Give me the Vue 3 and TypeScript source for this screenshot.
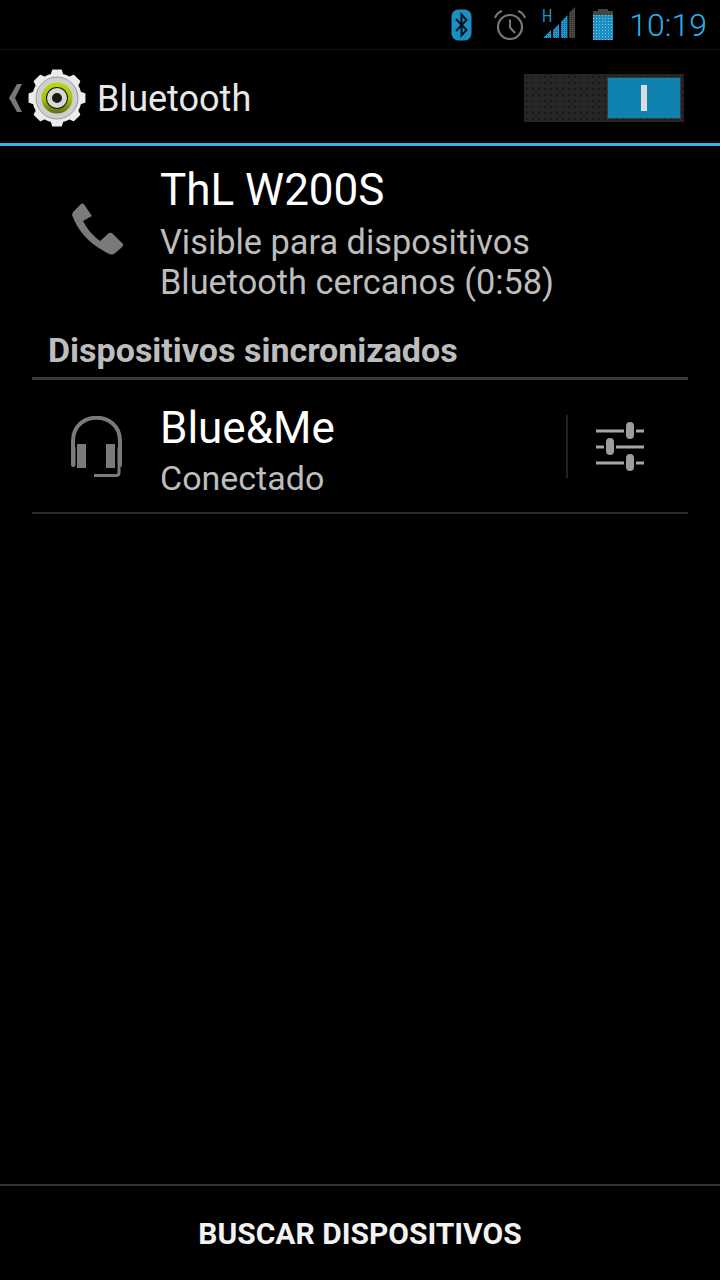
<template>
    <div class="screen">
        <div class="status-bar">
            <svg class="st-bt" width="21" height="32" viewBox="0 0 21 32">
                <rect x="0.5" y="0.5" width="20" height="31" rx="7" fill="#1b8fc4" />
                <path d="M5 10 L15.5 21 L10.5 26.5 V5.5 L15.5 11 L5 22" fill="none" stroke="#04141c" stroke-width="2" />
            </svg>
            <svg class="st-alarm" width="32" height="31" viewBox="0 0 32 31">
                <circle cx="16" cy="17" r="12" fill="none" stroke="#777" stroke-width="2.2" />
                <path d="M16 9.5 V17.5 L21 23" fill="none" stroke="#777" stroke-width="2" />
                <path d="M1 8 Q3 2.5 8 1 M24 1 Q29 2.5 31 8" fill="none" stroke="#777" stroke-width="2" />
            </svg>
            <div class="st-signal">
                <span class="st-h">H</span>
                <svg width="33" height="32" viewBox="0 0 33 32">
                    <defs>
                        <pattern id="sig-dots" width="2" height="2" patternUnits="userSpaceOnUse">
                            <rect width="2" height="2" fill="#1b9ad2" />
                            <rect width="1" height="1" fill="#0d5f85" />
                        </pattern>
                        <pattern id="sig-off" width="2" height="2" patternUnits="userSpaceOnUse">
                            <rect width="2" height="2" fill="#484848" />
                            <rect width="1" height="1" fill="#2c2c2c" />
                        </pattern>
                    </defs>
                    <path d="M0 31 L8 23 V31 Z" fill="url(#sig-dots)" />
                    <path d="M10 23 L16 17 V31 H10 Z" fill="url(#sig-dots)" />
                    <path d="M18 15 L24.5 8 V31 H18 Z" fill="url(#sig-dots)" />
                    <path d="M26 6 L32 0 V31 H26 Z" fill="url(#sig-off)" />
                </svg>
            </div>
            <svg class="st-batt" width="20" height="31" viewBox="0 0 20 31">
                <defs>
                    <pattern id="bat-dots" width="3" height="3" patternUnits="userSpaceOnUse">
                        <rect width="3" height="3" fill="#1b8fc4" />
                        <rect width="1" height="1" fill="#7cc6e6" />
                    </pattern>
                </defs>
                <rect x="5" y="0" width="10" height="3" fill="#444" />
                <rect x="0" y="2" width="20" height="4" fill="#444" />
                <rect x="0" y="6" width="20" height="25" fill="url(#bat-dots)" />
            </svg>
            <span class="st-time">10:19</span>
        </div>

        <div class="action-bar">
            <svg class="ab-back" width="13" height="28" viewBox="0 0 13 28">
                <path d="M13 0 H8 L0 14 L8 28 H13 L6 14 Z" fill="#777" />
            </svg>
            <svg class="ab-icon" width="60" height="60" viewBox="0 0 60 60">
                <defs>
                    <linearGradient id="green-ring" x1="0" y1="0" x2="0" y2="1">
                        <stop offset="0" stop-color="#bcd80c" />
                        <stop offset="0.55" stop-color="#a3bf12" />
                        <stop offset="1" stop-color="#5f6a14" />
                    </linearGradient>
                </defs>
                <path :d="gearPath" fill="#ececec" stroke="#ececec" stroke-width="1.5" stroke-linejoin="round" />
                <circle cx="30" cy="30" r="21" fill="#cfcfcf" stroke="#9a9a9a" stroke-width="1" />
                <circle cx="30" cy="30" r="15.5" fill="url(#green-ring)" />
                <circle cx="30" cy="30" r="11" fill="#1a1a10" />
                <circle cx="30" cy="30" r="7.5" fill="none" stroke="#d8d8d8" stroke-width="5" />
            </svg>
            <span class="ab-title">Bluetooth</span>
            <div class="ab-switch">
                <div class="ab-switch-thumb"><span class="ab-switch-i"></span></div>
            </div>
        </div>
        <div class="ab-line"></div>

        <div class="local-device">
            <div class="icon-col">
                <svg class="icon-phone" width="52" height="52" viewBox="0 0 52 52">
                    <path d="M0 12 Q0 9 3 7 L9 1 Q11 -0.5 12.5 2 L20 13 L11 18 Q17 30 28 38 L37 30 Q39 29 41 31 L51 41 Q51.5 43 49 45 L42 51 Q38 52.5 32 48 Q9 36 0 12 Z" fill="#7a7a7a" />
                </svg>
            </div>
            <div class="text-col">
                <div class="name name-big">ThL W200S</div>
                <div class="sub">Visible para dispositivos</div>
                <div class="sub">Bluetooth cercanos (0:58)</div>
            </div>
        </div>

        <div class="section-title">Dispositivos sincronizados</div>
        <div class="section-line"></div>

        <div class="device-row">
            <div class="icon-col">
                <svg class="icon-headset" width="51" height="62" viewBox="0 0 51 62">
                    <path d="M2 36 V25 C2 -6 49 -6 49 25 V36" fill="none" stroke="#7a7a7a" stroke-width="4" />
                    <rect x="0" y="30" width="4.5" height="21" rx="2" fill="#7a7a7a" />
                    <rect x="46.5" y="30" width="4.5" height="21" rx="2" fill="#7a7a7a" />
                    <rect x="6" y="28" width="9" height="24" fill="#7a7a7a" />
                    <rect x="35" y="28" width="9" height="24" fill="#7a7a7a" />
                    <path d="M48 50 V57 Q48 59.5 45 59.5 H23" fill="none" stroke="#7a7a7a" stroke-width="3" />
                </svg>
            </div>
            <div class="text-col">
                <div class="name">Blue&amp;Me</div>
                <div class="sub sub-status">Conectado</div>
            </div>
            <div class="row-action">
                <svg class="icon-tune" width="48" height="50" viewBox="0 0 48 50">
                    <g fill="#a6a6a6">
                        <rect x="0" y="7.5" width="28" height="3" />
                        <rect x="40" y="7.5" width="8" height="3" />
                        <rect x="0" y="23.5" width="8" height="3" />
                        <rect x="20" y="23.5" width="28" height="3" />
                        <rect x="0" y="39.5" width="28" height="3" />
                        <rect x="40" y="39.5" width="8" height="3" />
                    </g>
                    <g fill="#9c9c9c">
                        <rect x="30" y="0" width="8" height="17" rx="4" />
                        <rect x="10" y="16" width="8" height="17" rx="4" />
                        <rect x="30" y="32" width="8" height="17" rx="4" />
                    </g>
                </svg>
            </div>
        </div>
        <div class="row-line"></div>

        <div class="spacer"></div>

        <div class="bottom-bar">BUSCAR DISPOSITIVOS</div>
    </div>
</template>

<script setup lang="ts">
// gear outline, 8 teeth round the icon centre
const makeGear = (): string => {
    const pts: string[] = [];
    const teeth = 8;
    for (let i = 0; i < teeth; i++) {
        const a = (i / teeth) * Math.PI * 2 - Math.PI / 2;
        const step = (Math.PI * 2) / teeth;
        const rows: Array<[number, number]> = [
            [24, -0.5 * step],
            [24, -0.3 * step],
            [28, -0.19 * step],
            [28, 0.19 * step],
            [24, 0.3 * step],
        ];
        rows.forEach(([r, off]) => {
            const x = 30 + r * Math.cos(a + off);
            const y = 30 + r * Math.sin(a + off);
            pts.push(`${x.toFixed(2)} ${y.toFixed(2)}`);
        });
    }
    return `M${pts.join(" L")} Z`;
};

const gearPath = makeGear();
</script>

<style>
html,
body {
    margin: 0;
    background: #000;
}
</style>

<style scoped>
.screen {
    width: 720px;
    height: 1280px;
    background: #000;
    display: flex;
    flex-direction: column;
    font-family: Roboto, "Liberation Sans", sans-serif;
    overflow: hidden;
}

.status-bar {
    height: 50px;
    box-sizing: border-box;
    border-bottom: 1px solid #111;
    display: flex;
    align-items: center;
    justify-content: flex-end;
    padding-right: 13px;
}

.st-bt {
    margin-right: 22px;
}

.st-alarm {
    margin-right: 17px;
    margin-top: 1px;
}

.st-signal {
    position: relative;
    width: 33px;
    height: 32px;
    margin-right: 17px;
    margin-bottom: 3px;
}

.st-h {
    position: absolute;
    left: -1px;
    top: 0;
    font-size: 18px;
    line-height: 18px;
    color: #1b9ad2;
    transform: scaleX(0.8);
    transform-origin: left;
}

.st-batt {
    margin-right: 16px;
}

.st-time {
    font-size: 32px;
    font-weight: 300;
    color: #2ab1e6;
    line-height: 50px;
}

.action-bar {
    height: 93px;
    box-sizing: border-box;
    display: flex;
    align-items: center;
    padding: 2px 36px 0 9px;
}

.ab-back {
    margin-right: 5px;
}

.ab-icon {
    margin-right: 10px;
}

.ab-title {
    font-size: 36px;
    color: #e8e8e8;
    flex: 1;
    margin-top: 3px;
}

.ab-switch {
    width: 160px;
    height: 48px;
    background-color: #262626;
    background-image: radial-gradient(#191919 1px, transparent 1px);
    background-size: 6px 6px;
    box-sizing: border-box;
    padding: 3px 3px 3px 83px;
}

.ab-switch-thumb {
    width: 74px;
    height: 42px;
    box-sizing: border-box;
    background: #0f82b0;
    border: 1px solid #3a3a3a;
    display: flex;
    align-items: center;
    justify-content: center;
}

.ab-switch-i {
    width: 6px;
    height: 26px;
    background: #dcdcdc;
}

.ab-line {
    height: 3px;
    background: #33b5e5;
}

.local-device {
    display: flex;
    height: 160px;
    padding-left: 32px;
}

.icon-col {
    width: 128px;
    flex-shrink: 0;
    display: flex;
    align-items: center;
    padding-left: 39px;
    box-sizing: border-box;
}

.icon-phone {
    margin-left: 1px;
    margin-top: 6px;
}

.icon-headset {
    margin-top: 2px;
}

.text-col {
    flex: 1;
    display: flex;
    flex-direction: column;
}

.name {
    font-size: 44px;
    line-height: 52px;
    color: #fff;
}

.name-big {
    margin-top: 18px;
    margin-bottom: 6px;
}

.sub {
    font-size: 34.3px;
    line-height: 40px;
    color: #bdbdbd;
}

.section-title {
    margin-top: 22px;
    padding-left: 48px;
    font-size: 34px;
    font-weight: 700;
    line-height: 44px;
    color: #bdbdbd;
}

.section-line {
    height: 3px;
    margin: 5px 32px 0;
    background: #3a3a3a;
}

.device-row {
    display: flex;
    height: 132px;
    padding: 0 32px;
    align-items: stretch;
}

.device-row .name {
    margin-top: 22px;
}

.sub-status {
    margin-top: 4px;
    font-size: 34px;
}

.row-action {
    display: flex;
    align-items: center;
    margin: 35px 0 34px;
    padding: 0 44px 0 28px;
    border-left: 2px solid #222;
}

.icon-tune {
    margin-top: 1px;
}

.row-line {
    height: 2px;
    margin: 0 32px;
    background: #2c2c2c;
}

.spacer {
    flex: 1;
}

.bottom-bar {
    height: 96px;
    border-top: 2px solid #333;
    box-sizing: border-box;
    display: flex;
    align-items: center;
    justify-content: center;
    font-size: 30px;
    font-weight: 700;
    color: #f2f2f2;
}
</style>
